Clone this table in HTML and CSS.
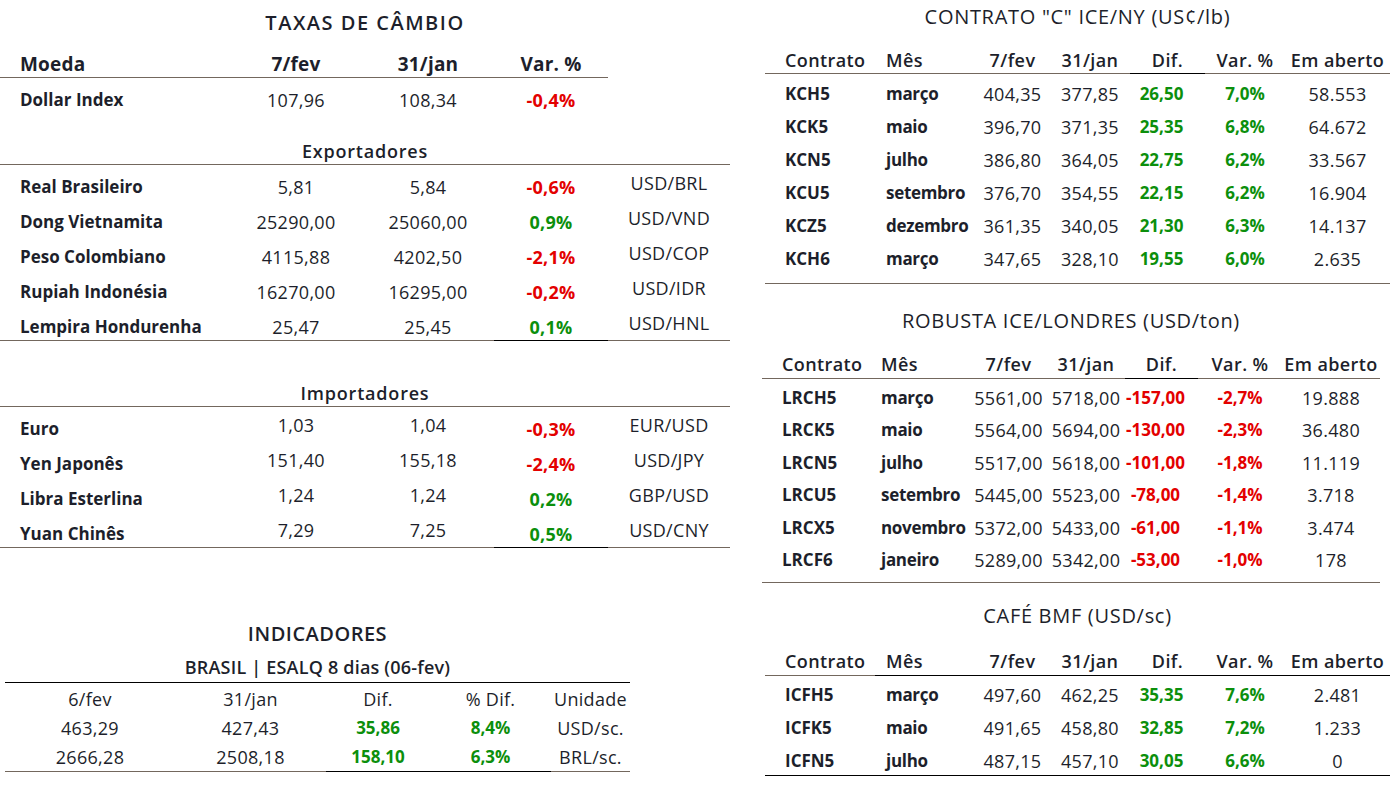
FILE: index.html
```html
<!DOCTYPE html>
<html lang="pt-BR">
<head>
<meta charset="utf-8">
<title>Taxas e Contratos</title>
<link rel="stylesheet" href="styles.css">
</head>
<body>
<div class="page">
  <section class="left">
    <div class="fx">
      <h1 class="title fx-title">TAXAS DE CÂMBIO</h1>
      <div class="fx-row head">
        <div class="c name bl">Moeda</div><div class="c bl">7/fev</div><div class="c bl">31/jan</div><div class="c bl">Var. %</div><div class="c"></div>
      </div>
      <div class="fx-row dollar">
        <div class="c name">Dollar Index</div><div class="c num">107,96</div><div class="c num">108,34</div><div class="c neg">-0,4%</div><div class="c unit"></div>
      </div>
      <div class="sub sub-exp">Exportadores</div>
      <div class="fx-row">
        <div class="c name">Real Brasileiro</div><div class="c num">5,81</div><div class="c num">5,84</div><div class="c neg">-0,6%</div><div class="c unit">USD/BRL</div>
      </div>
      <div class="fx-row">
        <div class="c name">Dong Vietnamita</div><div class="c num">25290,00</div><div class="c num">25060,00</div><div class="c pos">0,9%</div><div class="c unit">USD/VND</div>
      </div>
      <div class="fx-row">
        <div class="c name">Peso Colombiano</div><div class="c num">4115,88</div><div class="c num">4202,50</div><div class="c neg">-2,1%</div><div class="c unit">USD/COP</div>
      </div>
      <div class="fx-row">
        <div class="c name">Rupiah Indonésia</div><div class="c num">16270,00</div><div class="c num">16295,00</div><div class="c neg">-0,2%</div><div class="c unit">USD/IDR</div>
      </div>
      <div class="fx-row end">
        <div class="c name">Lempira Hondurenha</div><div class="c num">25,47</div><div class="c num">25,45</div><div class="c pos dark">0,1%</div><div class="c unit">USD/HNL</div>
      </div>
      <div class="sub sub-imp">Importadores</div>
      <div class="fx-row imp">
        <div class="c name">Euro</div><div class="c num">1,03</div><div class="c num">1,04</div><div class="c neg">-0,3%</div><div class="c unit">EUR/USD</div>
      </div>
      <div class="fx-row imp">
        <div class="c name">Yen Japonês</div><div class="c num">151,40</div><div class="c num">155,18</div><div class="c neg">-2,4%</div><div class="c unit">USD/JPY</div>
      </div>
      <div class="fx-row imp">
        <div class="c name">Libra Esterlina</div><div class="c num">1,24</div><div class="c num">1,24</div><div class="c pos">0,2%</div><div class="c unit">GBP/USD</div>
      </div>
      <div class="fx-row imp end">
        <div class="c name">Yuan Chinês</div><div class="c num">7,29</div><div class="c num">7,25</div><div class="c pos dark">0,5%</div><div class="c unit">USD/CNY</div>
      </div>
    </div>

    <div class="ind">
      <h2 class="title ind-title">INDICADORES</h2>
      <div class="ind-sub">BRASIL | ESALQ 8 dias (06-fev)</div>
      <div class="ind-row">
        <div class="c num">6/fev</div><div class="c num">31/jan</div><div class="c num">Dif.</div><div class="c num">% Dif.</div><div class="c num">Unidade</div>
      </div>
      <div class="ind-row">
        <div class="c num">463,29</div><div class="c num">427,43</div><div class="c pos">35,86</div><div class="c pos">8,4%</div><div class="c num">USD/sc.</div>
      </div>
      <div class="ind-row end">
        <div class="c num">2666,28</div><div class="c num">2508,18</div><div class="c pos dark">158,10</div><div class="c pos dark">6,3%</div><div class="c num">BRL/sc.</div>
      </div>
    </div>
  </section>

  <section class="right">
    <div class="ct ct-ny">
      <h2 class="ct-title">CONTRATO "C" ICE/NY (US¢/lb)</h2>
      <div class="ct-row ct-head">
        <div class="c name">Contrato</div><div class="c mes">Mês</div><div class="c">7/fev</div><div class="c">31/jan</div><div class="c dark">Dif.</div><div class="c">Var. %</div><div class="c">Em aberto</div>
      </div>
      <div class="ct-body">
        <div class="ct-row"><div class="c name">KCH5</div><div class="c mes">março</div><div class="c num">404,35</div><div class="c num">377,85</div><div class="c pos dif">26,50</div><div class="c pos">7,0%</div><div class="c num">58.553</div></div>
        <div class="ct-row"><div class="c name">KCK5</div><div class="c mes">maio</div><div class="c num">396,70</div><div class="c num">371,35</div><div class="c pos dif">25,35</div><div class="c pos">6,8%</div><div class="c num">64.672</div></div>
        <div class="ct-row"><div class="c name">KCN5</div><div class="c mes">julho</div><div class="c num">386,80</div><div class="c num">364,05</div><div class="c pos dif">22,75</div><div class="c pos">6,2%</div><div class="c num">33.567</div></div>
        <div class="ct-row"><div class="c name">KCU5</div><div class="c mes">setembro</div><div class="c num">376,70</div><div class="c num">354,55</div><div class="c pos dif">22,15</div><div class="c pos">6,2%</div><div class="c num">16.904</div></div>
        <div class="ct-row"><div class="c name">KCZ5</div><div class="c mes">dezembro</div><div class="c num">361,35</div><div class="c num">340,05</div><div class="c pos dif">21,30</div><div class="c pos">6,3%</div><div class="c num">14.137</div></div>
        <div class="ct-row"><div class="c name">KCH6</div><div class="c mes">março</div><div class="c num">347,65</div><div class="c num">328,10</div><div class="c pos dif">19,55</div><div class="c pos">6,0%</div><div class="c num">2.635</div></div>
      </div>
    </div>

    <div class="ct ct-lon">
      <h2 class="ct-title">ROBUSTA ICE/LONDRES (USD/ton)</h2>
      <div class="ct-row ct-head">
        <div class="c name">Contrato</div><div class="c mes">Mês</div><div class="c">7/fev</div><div class="c">31/jan</div><div class="c dark">Dif.</div><div class="c">Var. %</div><div class="c">Em aberto</div>
      </div>
      <div class="ct-body">
        <div class="ct-row"><div class="c name">LRCH5</div><div class="c mes">março</div><div class="c num">5561,00</div><div class="c num">5718,00</div><div class="c neg dif">-157,00</div><div class="c neg">-2,7%</div><div class="c num">19.888</div></div>
        <div class="ct-row"><div class="c name">LRCK5</div><div class="c mes">maio</div><div class="c num">5564,00</div><div class="c num">5694,00</div><div class="c neg dif">-130,00</div><div class="c neg">-2,3%</div><div class="c num">36.480</div></div>
        <div class="ct-row"><div class="c name">LRCN5</div><div class="c mes">julho</div><div class="c num">5517,00</div><div class="c num">5618,00</div><div class="c neg dif">-101,00</div><div class="c neg">-1,8%</div><div class="c num">11.119</div></div>
        <div class="ct-row"><div class="c name">LRCU5</div><div class="c mes">setembro</div><div class="c num">5445,00</div><div class="c num">5523,00</div><div class="c neg dif">-78,00</div><div class="c neg">-1,4%</div><div class="c num">3.718</div></div>
        <div class="ct-row"><div class="c name">LRCX5</div><div class="c mes">novembro</div><div class="c num">5372,00</div><div class="c num">5433,00</div><div class="c neg dif">-61,00</div><div class="c neg">-1,1%</div><div class="c num">3.474</div></div>
        <div class="ct-row"><div class="c name">LRCF6</div><div class="c mes">janeiro</div><div class="c num">5289,00</div><div class="c num">5342,00</div><div class="c neg dif">-53,00</div><div class="c neg">-1,0%</div><div class="c num">178</div></div>
      </div>
    </div>

    <div class="ct ct-bmf">
      <h2 class="ct-title">CAFÉ BMF (USD/sc)</h2>
      <div class="ct-row ct-head">
        <div class="c name">Contrato</div><div class="c mes dark">Mês</div><div class="c dark">7/fev</div><div class="c dark">31/jan</div><div class="c dark">Dif.</div><div class="c dark">Var. %</div><div class="c dark">Em aberto</div>
      </div>
      <div class="ct-body">
        <div class="ct-row"><div class="c name">ICFH5</div><div class="c mes">março</div><div class="c num">497,60</div><div class="c num">462,25</div><div class="c pos dif">35,35</div><div class="c pos">7,6%</div><div class="c num">2.481</div></div>
        <div class="ct-row"><div class="c name">ICFK5</div><div class="c mes">maio</div><div class="c num">491,65</div><div class="c num">458,80</div><div class="c pos dif">32,85</div><div class="c pos">7,2%</div><div class="c num">1.233</div></div>
        <div class="ct-row"><div class="c name">ICFN5</div><div class="c mes">julho</div><div class="c num">487,15</div><div class="c num">457,10</div><div class="c pos dif">30,05</div><div class="c pos">6,6%</div><div class="c num">0</div></div>
      </div>
    </div>
  </section>
</div>
</body>
</html>
```

FILE: styles.css
```css
* { box-sizing: border-box; margin: 0; padding: 0; }

html, body {
  background: #ffffff;
}

body {
  font-family: "Open Sans", "Liberation Sans", sans-serif;
  font-size: 18px;
  letter-spacing: 0.3px;
  color: #1d1f2b;
  width: 1391px;
  height: 802px;
  overflow: hidden;
}

.page {
  display: flex;
  gap: 32px;
}

/* ---------- shared ---------- */
.c {
  line-height: 26px;
  text-align: center;
  white-space: nowrap;
}

.num { font-weight: 400; }
.pos { color: #0c8f0c; font-weight: 700; }
.neg { color: #e30000; font-weight: 700; }

.title {
  font-size: 20px;
  font-weight: 600;
  text-align: center;
  line-height: 30px;
  color: #1d1f2b;
}

/* ---------- left: exchange rates ---------- */
.left {
  width: 730px;
  display: flex;
  flex-direction: column;
}

.fx-title {
  height: 42px;
  padding-top: 8px;
  letter-spacing: 1.5px;
}

.fx-row {
  display: grid;
  grid-template-columns: 230px 132px 132px 114px 122px;
  height: 35px;
}

.fx-row .c {
  padding-top: 9px;
}

.fx-row.dollar .c {
  padding-top: 10px;
}

.fx-row .name {
  text-align: left;
  padding-left: 20px;
  font-size: 17px;
  letter-spacing: 0;
  font-weight: 700;
}

.fx-row.head .c {
  font-size: 19px;
  letter-spacing: 0.2px;
  font-weight: 700;
}

.fx-row.head .bl {
  border-bottom: 1px solid #73675d;
}

.fx-row .unit {
  padding-top: 5px;
  font-weight: 400;
}

.fx-row.imp .num {
  padding-top: 5px;
}

.fx-row.end .c {
  border-bottom: 1px solid #73675d;
}

.fx-row.end .c.dark {
  border-bottom-color: #000000;
}

.sub {
  text-align: center;
  font-weight: 600;
  letter-spacing: 0.8px;
  line-height: 26px;
  border-bottom: 1px solid #73675d;
}

.sub-exp {
  height: 53px;
  padding-top: 26px;
}

.sub-imp {
  height: 67px;
  padding-top: 40px;
}

/* ---------- left: indicators ---------- */
.ind {
  width: 625px;
  margin-left: 5px;
  margin-top: 72px;
}

.ind-title {
  height: 30px;
  letter-spacing: 0.5px;
}

.ind-sub {
  height: 34px;
  padding-top: 5px;
  line-height: 26px;
  text-align: center;
  font-weight: 600;
  letter-spacing: 0.2px;
  border-bottom: 1px solid #000000;
}

.ind-row {
  display: grid;
  grid-template-columns: 170px 151px 104px 121px 79px;
  height: 29px;
}

.ind-row .c {
  padding-top: 3px;
}

.ind-row .pos {
  font-size: 17px;
  letter-spacing: 0;
}

.ind-row.end {
  height: 31px;
}

.ind-row.end .c {
  border-bottom: 1px solid #73675d;
}

.ind-row.end .c.dark {
  border-bottom-color: #000000;
}

/* ---------- right: contracts ---------- */
.right {
  width: 629px;
  display: flex;
  flex-direction: column;
}

.ct-title {
  font-size: 20px;
  font-weight: 500;
  letter-spacing: 0.7px;
  text-align: center;
  line-height: 26px;
}

.ct-row {
  display: grid;
}

.ct-head .c {
  font-weight: 600;
  letter-spacing: 0.4px;
  border-bottom: 1px solid #73675d;
}

.ct-head .c.dark {
  border-bottom-color: #000000;
}

.ct-row .name {
  text-align: left;
  padding-left: 20px;
  font-size: 17px;
  letter-spacing: 0;
  font-weight: 700;
}

.ct-row .mes {
  text-align: left;
  font-size: 17px;
  letter-spacing: -0.3px;
  font-weight: 700;
}

.ct-head .name,
.ct-head .mes {
  font-size: 18px;
  letter-spacing: 0.4px;
  font-weight: 600;
}

.ct-row .pos,
.ct-row .neg {
  font-size: 17px;
  letter-spacing: 0;
}

.ct-body {
  border-bottom: 1px solid #73675d;
}

/* NY */
.ct-ny {
  width: 625px;
  margin-left: 3px;
}

.ct-ny .ct-title {
  height: 38px;
  padding-top: 4px;
}

.ct-ny .ct-row {
  grid-template-columns: 110px 100px 75px 80px 75px 80px 105px;
  height: 33px;
}

.ct-ny .ct-row .c { padding-top: 8px; }
.ct-ny .ct-row .mes { padding-left: 11px; }

.ct-ny .ct-head { height: 35px; }
.ct-ny .ct-head .c { padding-top: 9px; }

.ct-ny .ct-body {
  padding-bottom: 12px;
}

/* London */
.ct-lon {
  width: 618px;
}

.ct-lon .ct-title {
  height: 60px;
  padding-top: 24px;
}

.ct-lon .ct-row {
  grid-template-columns: 110px 98px 77px 78px 73px 84px 98px;
  height: 32.4px;
}

.ct-lon .ct-row .c { padding-top: 6px; }
.ct-lon .ct-row .mes { padding-left: 9px; }

.ct-lon .ct-head { height: 35px; }
.ct-lon .ct-head .c { padding-top: 7px; }

.ct-lon .ct-body {
  padding-bottom: 9px;
}

/* BMF */
.ct-bmf {
  width: 625px;
  margin-left: 3px;
}

.ct-bmf .ct-title {
  height: 58px;
  padding-top: 20px;
}

.ct-bmf .ct-row {
  grid-template-columns: 110px 100px 75px 80px 75px 80px 105px;
  height: 33px;
}

.ct-bmf .ct-row .c { padding-top: 6px; }
.ct-bmf .ct-row .mes { padding-left: 11px; }

.ct-bmf .ct-head { height: 35px; }
.ct-bmf .ct-head .c { padding-top: 7px; }

.ct-bmf .ct-body {
  border-bottom-color: #000000;
}

.dif { padding-right: 12px; }
```
